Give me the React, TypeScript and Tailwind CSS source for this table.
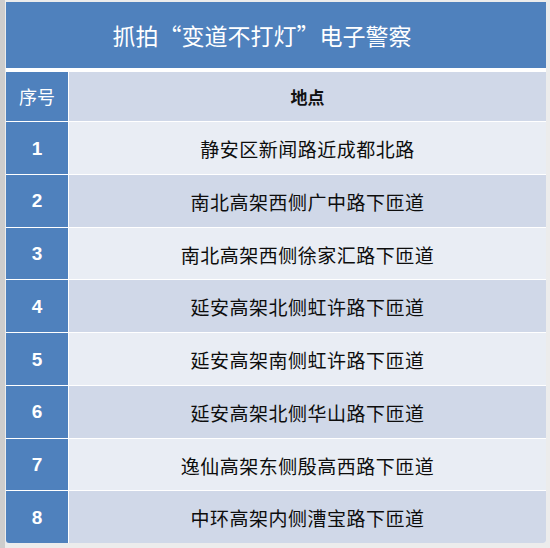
import React from 'react';

// rows of the camera list
const places: string[] = [
  '静安区新闻路近成都北路',
  '南北高架西侧广中路下匝道',
  '南北高架西侧徐家汇路下匝道',
  '延安高架北侧虹许路下匝道',
  '延安高架南侧虹许路下匝道',
  '延安高架北侧华山路下匝道',
  '逸仙高架东侧殷高西路下匝道',
  '中环高架内侧漕宝路下匝道',
];

const cjk = { fontFamily: '"Noto Sans CJK SC", sans-serif' };
const latin = { fontFamily: '"Liberation Sans", Arial, sans-serif' };

export default function App() {
  return (
    <div
      className="w-[550px] h-[548px] bg-[#ececec] pl-[1px] pt-[2px] pr-[4px] pb-[5px] border-l-[5px] border-[#cdcdcd]"
      style={cjk}
    >
      <div className="flex flex-col h-full rounded-b-[3px] overflow-hidden bg-white">
        {/* Title */}
        <div className="h-[66px] shrink-0 bg-[#4f81bd] flex items-center justify-center text-white text-[23px] pr-[28px]">
          抓拍“变道不打灯”电子警察
        </div>

        {/* Header */}
        <div className="mt-[4px] h-[49px] shrink-0 flex">
          <div className="w-[62px] bg-[#4f81bd] flex items-center justify-center text-white text-[18px]">
            序号
          </div>
          <div className="flex-1 ml-[1px] bg-[#d0d8e8] flex items-center justify-center text-[17px] font-bold text-[#111]">
            地点
          </div>
        </div>

        {/* Rows */}
        <div className="flex-1 flex flex-col">
          {places.map((p, i) => (
            <div key={i} className="flex-1 flex border-t border-white">
              <div
                className="w-[62px] bg-[#4f81bd] flex items-center justify-center text-white text-[19px] font-bold pt-[2px]"
                style={latin}
              >
                {i + 1}
              </div>
              <div
                className={
                  'flex-1 ml-[1px] flex items-center justify-center text-[19px] text-[#0d0d0d] tracking-[0.5px] pt-[3px] ' +
                  (i % 2 === 0 ? 'bg-[#e9edf4]' : 'bg-[#d0d8e8]')
                }
              >
                {p}
              </div>
            </div>
          ))}
        </div>
      </div>
    </div>
  );
}
